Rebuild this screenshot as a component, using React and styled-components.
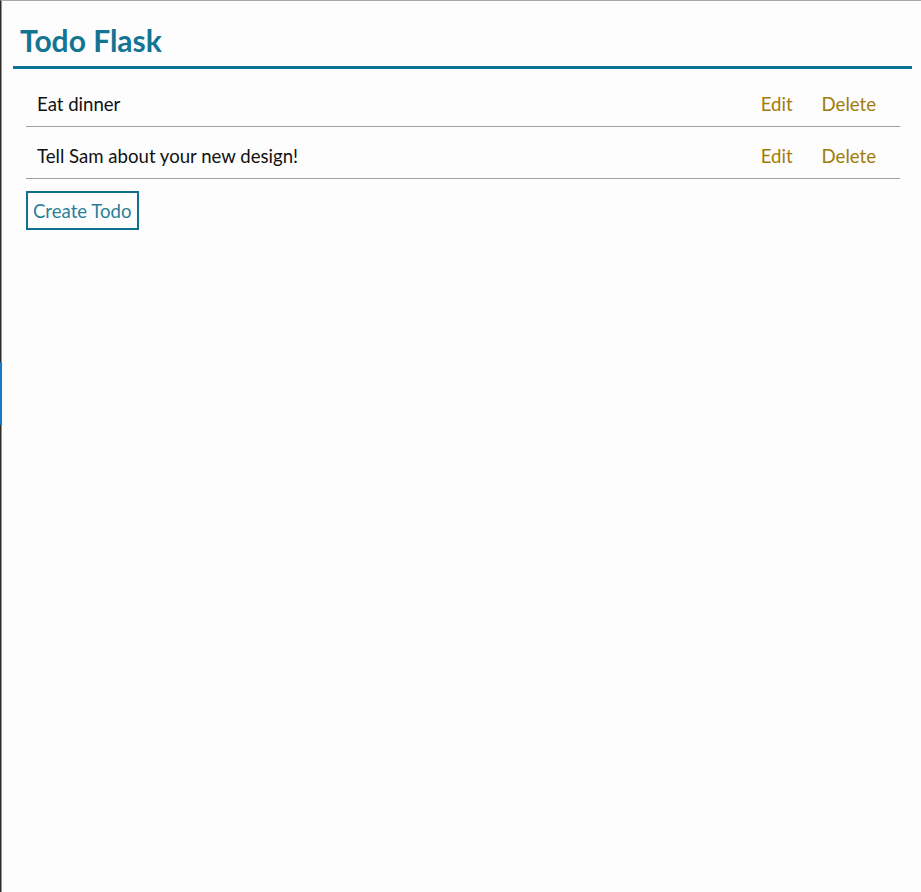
import React from "react";
import styled, { createGlobalStyle } from "styled-components";

const GlobalStyle = createGlobalStyle`
  html, body {
    margin: 0;
    padding: 0;
    background: #fdfdfd;
    font-family: Lato, "Open Sans", sans-serif;
  }
`;

const Frame = styled.div`
  position: relative;
  min-height: 892px;
  box-sizing: border-box;
  border-top: 1px solid #a8a8a8;
  border-left: 1px solid #2e2a26;
  box-shadow: inset 1px 0 0 #c88a2a;
  padding: 0 9px 0 12px;
`;

const EdgeAccent = styled.div`
  position: absolute;
  left: -1px;
  top: 361px;
  width: 2px;
  height: 63px;
  background: #1a78c2;
`;

const Header = styled.header`
  border-bottom: 3px solid #0b7595;
  padding: 21px 0 8px 7px;
`;

const Title = styled.h1`
  margin: 0;
  font-size: 30px;
  line-height: 36px;
  font-weight: 700;
  color: #137493;
`;

const Content = styled.main`
  padding: 6px 12px 0 13px;
`;

const List = styled.ul`
  list-style: none;
  margin: 0;
  padding: 0;
`;

const Row = styled.li`
  display: flex;
  align-items: center;
  box-sizing: border-box;
  height: 52px;
  padding: 7px 24px 0 11px;
  border-bottom: 1px solid #a0a0a0;
  font-size: 18.6px;
  color: #111;
`;

const Label = styled.span`
  flex: 1;
`;

const Action = styled.a`
  color: #a27b07;
  text-decoration: none;
  font-size: 18.6px;
  margin-left: ${(p) => (p.$gap ? "29px" : "0")};
  cursor: pointer;
`;

const CreateButton = styled.button`
  margin-top: 12px;
  height: 39px;
  padding: 0 5px;
  background: transparent;
  border: 2px solid #12708e;
  color: #2a7f99;
  font-family: Lato, "Open Sans", sans-serif;
  font-size: 18.6px;
  cursor: pointer;
`;

const todos = ["Eat dinner", "Tell Sam about your new design!"];

const App = () => (
  <>
    <GlobalStyle />
    <Frame>
      <EdgeAccent />
      <Header>
        <Title>Todo Flask</Title>
      </Header>
      <Content>
        <List>
          {todos.map((t) => (
            <Row key={t}>
              <Label>{t}</Label>
              <Action>Edit</Action>
              <Action $gap>Delete</Action>
            </Row>
          ))}
        </List>
        <CreateButton>Create Todo</CreateButton>
      </Content>
    </Frame>
  </>
);

export default App;
